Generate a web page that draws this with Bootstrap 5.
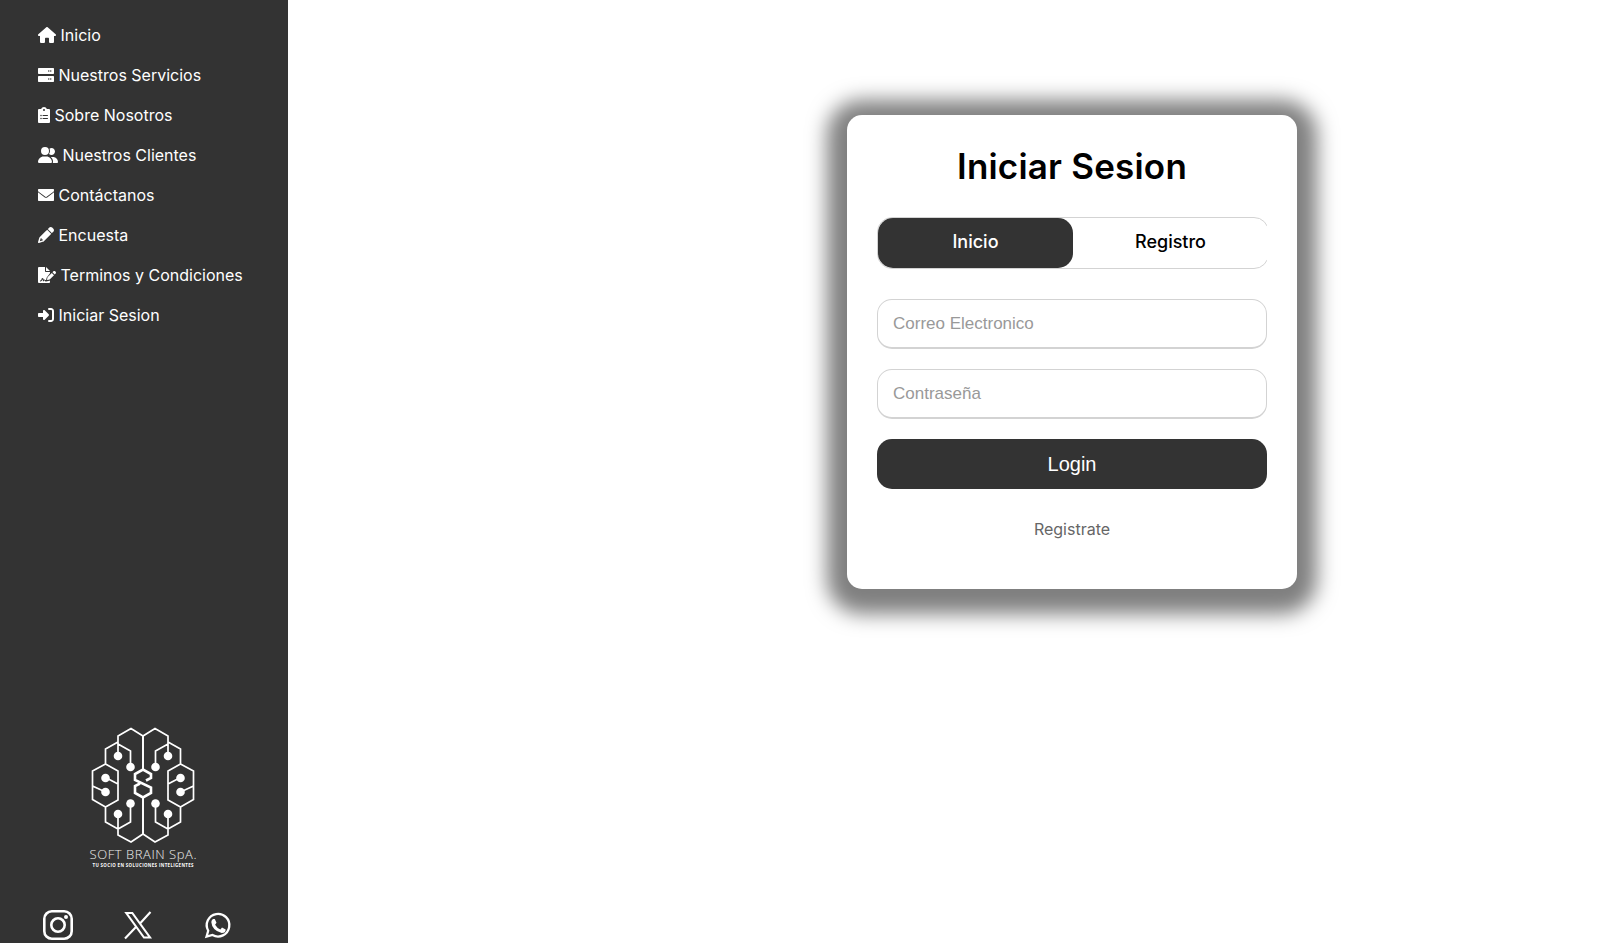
<!DOCTYPE html>
<html lang="es">
<head>
<meta charset="utf-8">
<title>Iniciar Sesion</title>
<link href="https://cdn.jsdelivr.net/npm/bootstrap@5.3.0/dist/css/bootstrap.min.css" rel="stylesheet">
<script src="https://cdn.jsdelivr.net/npm/bootstrap@5.3.0/dist/js/bootstrap.bundle.min.js"></script>
<style>
body{font-family:Inter,"Liberation Sans",sans-serif;color:#000;background:#fff;font-size:16px}
.side{width:288px;background:#333;padding:15px 28px 0}
.side .nav-link{color:#fff;height:40px;line-height:40px;padding:0 10px;white-space:nowrap}
.side .nav-link svg{height:16px;width:auto;fill:#fff;vertical-align:-2px;margin-right:4.5px}
.brand-logo{width:130px;height:160px;margin-left:52px}
.socials{margin:28px -28px 0;padding:0 40px;gap:44px;height:35px}
.socials svg{width:36px;height:36px}
.login-box{width:450px;height:474px;margin:115px 0 0 559px;padding:30px;border-radius:15px;background:#fff;box-shadow:0 5px 20px 20px rgba(0,0,0,.5)}
.login-box h1{font-size:35px;font-weight:600;line-height:42px;letter-spacing:.2px;margin:0 0 30px;text-align:center}
.tabs-wrap{width:390px;height:52px;overflow:hidden}
.tabs-in{width:392px;height:52px;border:1px solid lightgrey;border-radius:15px}
.tab-item{width:195px;height:50px;line-height:48px;font-size:18px;font-weight:500;text-align:center}
.tab-item.on{background:#333;color:#fff;border-radius:15px}
.login-form{margin-top:30px}
.login-form .form-control{height:50px;margin-bottom:20px;padding:0 0 0 15px;border:1px solid lightgrey;border-bottom-width:2px;border-radius:15px;font:17px "Liberation Sans",Arial,sans-serif}
.login-form .form-control::placeholder{color:#999}
.btn-go{height:50px;border:0;border-radius:15px;background:#333;color:#fff;font:20px "Liberation Sans",Arial,sans-serif}
.reg{color:#666;margin-top:28px;line-height:24px}
</style>
</head>
<body class="overflow-hidden">
<div class="d-flex vh-100">
<aside class="side d-flex flex-column flex-shrink-0 overflow-hidden">
<nav class="nav flex-column flex-nowrap">
<a class="nav-link" href="#"><svg viewBox="0 0 576 512"><path d="M575.800 255.500c0 18-15 32.100-32 32.100h-32l.7 160.200c0 2.700-.2 5.400-.5 8.100V472c0 22.100-17.900 40-40 40H392c-22.100 0-40-17.900-40-40V376c0-17.700-14.300-32-32-32h-64c-17.700 0-32 14.300-32 32v96c0 22.100-17.900 40-40 40H104c-22.100 0-40-17.900-40-40V287.600H32c-18 0-32-14-32-32.100 0-9 3-17 10-24L266.400 8c7-7 15-8 22-8s15 2 21 7L564.800 231.500c8 7 12 15 11 24z"/></svg>Inicio</a>
<a class="nav-link" href="#"><svg viewBox="0 0 512 512"><path fill-rule="evenodd" d="M24 32Q0 32 0 56v144q0 24 24 24h464q24 0 24-24V56q0-24-24-24zM344 104a24 24 0 1 1 0 48 24 24 0 1 1 0-48zM408 104a24 24 0 1 1 0 48 24 24 0 1 1 0-48zM24 288q-24 0-24 24v144q0 24 24 24h464q24 0 24-24V312q0-24-24-24zM344 360a24 24 0 1 1 0 48 24 24 0 1 1 0-48zM408 360a24 24 0 1 1 0 48 24 24 0 1 1 0-48z"/></svg>Nuestros Servicios</a>
<a class="nav-link" href="#"><svg viewBox="0 0 384 512"><path fill-rule="evenodd" d="M192 0c-41.800 0-77.400 26.700-90.500 64H40C15 64 0 80 0 104v368c0 25 15 40 40 40h304c25 0 40-15 40-40V104c0-24-15-40-40-40h-61.500C269.400 26.700 233.800 0 192 0zm0 64a32 32 0 1 1 0 64 32 32 0 1 1 0-64zM72 272a24 24 0 1 1 48 0 24 24 0 1 1-48 0zm88-16h144a16 16 0 0 1 0 32H160a16 16 0 0 1 0-32zM72 368a24 24 0 1 1 48 0 24 24 0 1 1-48 0zm88-16h144a16 16 0 0 1 0 32H160a16 16 0 0 1 0-32z"/></svg>Sobre Nosotros</a>
<a class="nav-link" href="#"><svg viewBox="0 0 640 512"><path d="M96 128a128 128 0 1 1 256 0A128 128 0 1 1 96 128zM0 482.300C0 383.800 79.800 304 178.300 304h91.400C368.200 304 448 383.800 448 482.300c0 16.400-13.300 29.700-29.700 29.700H29.700C13.300 512 0 498.700 0 482.300zM609.300 512H471.400c5.400-9.400 8.600-20.300 8.600-32v-8c0-60.700-27.100-115.200-69.800-151.800 2.400-.1 4.700-.2 7.100-.2h61.400C567.800 320 640 392.200 640 481.300c0 17-13.800 30.700-30.700 30.700zM432 256c-31 0-59-12.600-79.300-32.900C372.400 196.500 384 163.600 384 128c0-26.800-6.600-52.100-18.300-74.300C384.300 40.100 407.200 32 432 32c61.900 0 112 50.100 112 112s-50.100 112-112 112z"/></svg>Nuestros Clientes</a>
<a class="nav-link" href="#"><svg viewBox="0 0 512 512"><path d="M24 64Q0 64 0 88v24c0 15.100 7.100 29.300 19.200 38.400l217.600 163.200c11.400 8.500 27 8.500 38.400 0l217.600-163.200c12.100-9.100 19.200-23.300 19.200-38.400V88q0-24-24-24zM0 170v254q0 24 24 24h464q24 0 24-24V170L294.400 335c-22.800 17.100-54 17.100-76.800 0z"/></svg>Contáctanos</a>
<a class="nav-link" href="#"><svg viewBox="0 0 512 512"><path d="M410.300 231l11.300-11.300-33.900-33.900-62.100-62.100-33.900-33.900-11.300 11.300-22.600 22.600L58.600 322.900c-10.400 10.400-18 23.300-22.200 37.400L1 480.700c-2.500 8.400-.2 17.500 6.100 23.700s15.300 8.500 23.700 6.100l120.300-35.400c14.100-4.200 27-11.800 37.400-22.200L387.700 253.700zM160 399.400l-9.100 22.700c-4 3.100-8.500 5.400-13.300 6.900L59.400 452l23-78.100c1.400-4.900 3.800-9.400 6.900-13.300l22.700-9.100v32c0 8.800 7.200 16 16 16zM362.700 18.700L348.300 33.200l-22.600 22.600-11.400 11.300 33.900 33.900 62.100 62.100 33.900 33.900 11.300-11.300 22.600-22.600 14.500-14.500c25-25 25-65.500 0-90.500l-39.300-39.400c-25-25-65.500-25-90.500 0z"/></svg>Encuesta</a>
<a class="nav-link" href="#"><svg viewBox="0 0 576 512"><path d="M30 0Q0 0 0 30v452q0 30 30 30h324q30 0 30-30v-53.200c-5.400 5.200-12 9-19.500 10.900l-71 17.600c-8 2-16 2.700-24 2.700H240c-6 0-11.600-3.400-14.300-8.800l-7.700-15.300c-5-8-16-8-20 0l-8 16c-3 6-9 9-15 8s-12-5-14-11L144 391l-7.600 25.400C128 443 104 460 77 460H64v-28h13c13 0 25-9 29-21l12-40c8-25 43-25 51 0l10 32c19-10 43-5 57 11h24l16-68c4-14 11-27 21-37L384 202V160H256c-17.700 0-32-14.300-32-32V0zM256 0v128h128zM549.800 139.700c-15.600-15.600-40.900-15.600-56.600 0L463.800 169.100l71 71 29.400-29.400c15.600-15.600 15.600-40.900 0-56.600zM311.900 321c-4.100 4.100-7 9.200-8.400 14.900l-15 60.100c-1.400 5.500.2 11.200 4.200 15.200s9.700 5.600 15.200 4.200l60.100-15c5.600-1.400 10.800-4.300 14.900-8.400L512.100 262.700l-71-71z"/></svg>Terminos y Condiciones</a>
<a class="nav-link" href="#"><svg viewBox="0 0 512 512"><path d="M352 96h64c17.700 0 32 14.300 32 32v256c0 17.700-14.300 32-32 32h-64a32 32 0 0 0 0 64h64c53 0 96-43 96-96V128c0-53-43-96-96-96h-64a32 32 0 0 0 0 64zm-9.400 182.600c12.500-12.500 12.500-32.800 0-45.300l-128-128C194 86 160 101 160 128v64H32c-17.700 0-32 14.300-32 32v64c0 17.700 14.300 32 32 32h128v64c0 27 34 42 54.600 22.600z"/></svg>Iniciar Sesion</a>
</nav>
<svg class="brand-logo mt-auto flex-shrink-0" viewBox="0 0 130 160">
<g fill="none" stroke="#fff" stroke-width="1.7">
<g id="half"><path d="M63 49V16L51 8.500 38 16V33M38 22 25.500 29V44L12.500 51V79.500L25.500 87V102L38 109V115L51 122 63 114V78M38 24 50.500 31V44M25.500 44 38 51V80L25.500 87M25.500 57.500 38 64M12.500 66 25.500 72M50.500 86V102L38 109V94"/>
<g fill="#fff" stroke="none"><circle cx="38" cy="36" r="4.300"/><circle cx="50.500" cy="47" r="4.300"/><circle cx="25.500" cy="58" r="4.300"/><circle cx="25.500" cy="72" r="4.300"/><circle cx="50.500" cy="83.500" r="4.300"/><circle cx="38" cy="94" r="4.300"/></g></g>
<use href="#half" transform="matrix(-1 0 0 1 126 0)"/>
<path stroke-width="2.600" d="M66 60.500 71 58V54L63 49.500 55 54V60L71 67.500V73L63 77.500 55 73V66L60 63.500"/>
</g>
<text x="9.500" y="139" font-family="Open Sans" font-weight="300" font-size="13" fill="#eee" textLength="107">SOFT BRAIN SpA.</text>
<text x="12.500" y="146.500" font-family="Open Sans" font-weight="700" font-size="4.400" fill="#fff" textLength="101">TU SOCIO EN SOLUCIONES INTELIGENTES</text>
</svg>
<div class="socials d-flex flex-shrink-0">
<svg viewBox="0 0 36 36" fill="none" stroke="#fff" stroke-width="2.600"><rect x="4.300" y="3.300" width="27.400" height="27.400" rx="7.500"/><circle cx="18" cy="17" r="6.700"/><circle cx="26" cy="9" r="2" fill="#fff" stroke="none"/></svg>
<svg viewBox="0 0 36 36" fill="none" stroke="#fff" stroke-width="2.100"><path d="M6.300 5H12.300L30 29.500H24zM30.500 4 20 15.500M16 19 5 30.500"/></svg>
<svg viewBox="0 0 36 36"><path fill="none" stroke="#fff" stroke-width="2.300" d="M6.500 28.700 8.200 22.700A11.300 11.300 0 1 1 12.500 27z"/><path fill="#fff" d="M13 11h1.800l1.700 3.800-1.400 2q2 3.500 5.300 4.700l1.600-2 3.700 1.900q0 3.500-4 3.600Q12 22.500 11.300 14q.2-2 1.700-3z"/></svg>
</div>
</aside>
<main class="flex-grow-1">
<div class="login-box">
<h1>Iniciar Sesion</h1>
<div class="tabs-wrap"><div class="tabs-in d-flex"><div class="tab-item on">Inicio</div><div class="tab-item">Registro</div></div></div>
<form class="login-form">
<input class="form-control" type="email" placeholder="Correo Electronico">
<input class="form-control" type="password" placeholder="Contraseña">
<button class="btn-go w-100 d-block" type="button">Login</button>
<div class="reg text-center">Registrate</div>
</form>
</div>
</main>
</div>
</body>
</html>
